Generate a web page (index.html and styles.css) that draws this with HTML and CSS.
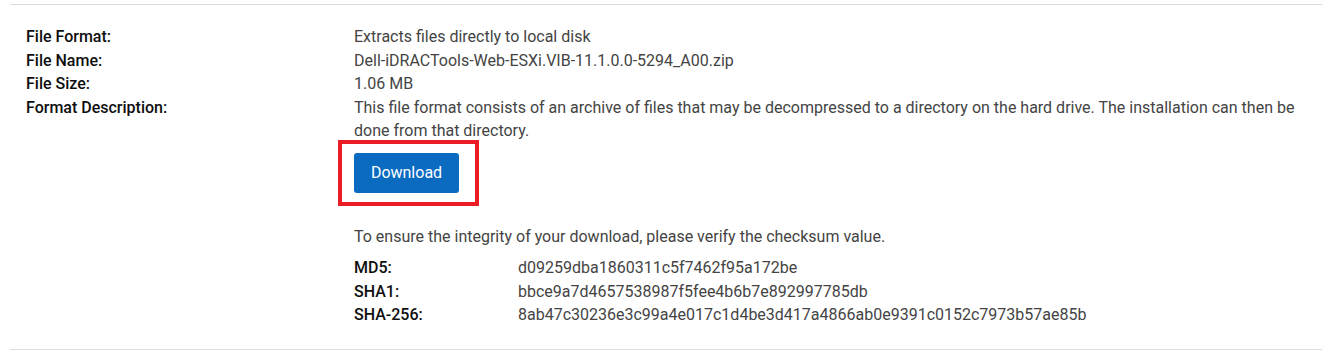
FILE: index.html
```html
<!DOCTYPE html>
<html lang="en">
<head>
<meta charset="utf-8">
<title>Download</title>
<link rel="stylesheet" href="styles.css">
</head>
<body>
<section class="panel">
  <dl class="details">
    <dt>File Format:</dt>
    <dd>Extracts files directly to local disk</dd>
    <dt>File Name:</dt>
    <dd>Dell-iDRACTools-Web-ESXi.VIB-11.1.0.0-5294_A00.zip</dd>
    <dt>File Size:</dt>
    <dd>1.06 MB</dd>
    <dt>Format Description:</dt>
    <dd>This file format consists of an archive of files that may be decompressed to a directory on the hard drive. The installation can then be done from that directory.
      <div class="action">
        <button class="btn-download" type="button">Download</button>
        <span class="highlight"></span>
      </div>
      <p class="integrity">To ensure the integrity of your download, please verify the checksum value.</p>
      <dl class="checksums">
        <dt>MD5:</dt><dd>d09259dba1860311c5f7462f95a172be</dd>
        <dt>SHA1:</dt><dd>bbce9a7d4657538987f5fee4b6b7e892997785db</dd>
        <dt>SHA-256:</dt><dd>8ab47c30236e3c99a4e017c1d4be3d417a4866ab0e9391c0152c7973b57ae85b</dd>
      </dl>
    </dd>
  </dl>
</section>
</body>
</html>
```
FILE: styles.css
```css
html, body {
  margin: 0;
  padding: 0;
  background: #fff;
}
body {
  font-family: Roboto, "Liberation Sans", Arial, sans-serif;
  font-size: 16px;
  line-height: 23.5px;
  color: #444;
}
.panel {
  margin: 4px 16px 0 10px;
  border-top: 1px solid #dcdcdc;
  border-bottom: 1px solid #dcdcdc;
  padding: 20px 16px 22px 16px;
}
.details {
  display: grid;
  grid-template-columns: 328px 1fr;
  margin: 0;
}
.details > dt {
  font-weight: 500;
  color: #0e0e0e;
}
.details > dd {
  margin: 0;
}
.action {
  position: relative;
  padding: 10px 0 0 0;
  height: 40px;
}
.btn-download {
  font-family: inherit;
  font-size: 16px;
  font-weight: 400;
  color: #fff;
  background: #0a6bc1;
  border: 0;
  border-radius: 3px;
  height: 40px;
  width: 105px;
  padding: 0;
  display: block;
}
.highlight {
  position: absolute;
  left: -16px;
  top: -3px;
  width: 133px;
  height: 58px;
  border: 4px solid #ec1c24;
}
.integrity {
  margin: 32px 0 0 0;
}
.checksums {
  display: grid;
  grid-template-columns: 164px 1fr;
  margin: 8px 0 0 0;
}
.checksums dt {
  font-weight: 500;
  color: #0e0e0e;
}
.checksums dd {
  margin: 0;
}
```
